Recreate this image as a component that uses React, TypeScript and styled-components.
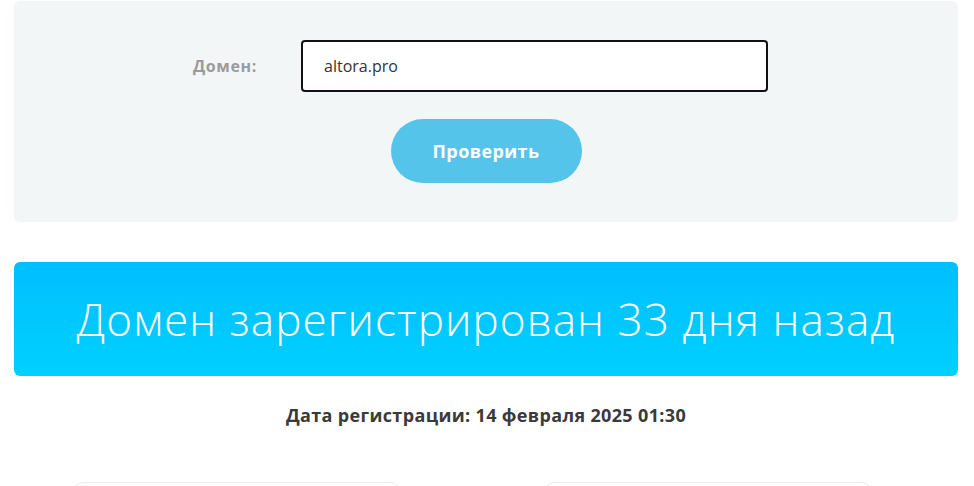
import * as React from 'react';
import styled, { createGlobalStyle } from 'styled-components';

const GlobalStyle = createGlobalStyle`
  html, body {
    margin: 0;
    padding: 0;
    background: #ffffff;
    font-family: "Open Sans", "Noto Sans", sans-serif;
  }
`;

const Page = styled.div`
  padding: 1px 16px 0 14px;
`;

const CheckPanel = styled.form`
  background: #f3f6f7;
  border-radius: 6px;
  height: 221px;
  box-sizing: border-box;
  padding-top: 39px;
  display: flex;
  flex-direction: column;
  align-items: center;
`;

const FieldRow = styled.div`
  display: flex;
  align-items: center;
  margin-left: -11px;
`;

const Label = styled.label`
  width: 108px;
  font-size: 16px;
  font-weight: 700;
  color: #9b9b9b;
  letter-spacing: 0.6px;
`;

const Input = styled.input`
  width: 467px;
  height: 52px;
  box-sizing: border-box;
  border: 2px solid #111;
  border-radius: 4px;
  background: #fff;
  padding: 0 0 0 21px;
  font-family: "Open Sans", "Noto Sans", sans-serif;
  font-size: 16px;
  color: #333;
  outline: none;
`;

const SubmitButton = styled.button`
  margin-top: 27px;
  width: 191px;
  height: 64px;
  border: none;
  border-radius: 32px;
  background: #55c4ea;
  color: #fff;
  font-family: "Open Sans", "Noto Sans", sans-serif;
  font-size: 18px;
  font-weight: 700;
  letter-spacing: 0.4px;
  cursor: pointer;
`;

const ResultBanner = styled.div`
  margin-top: 40px;
  height: 114px;
  border-radius: 6px;
  background: linear-gradient(180deg, #00bfff 0%, #00d0ff 100%);
  display: flex;
  align-items: center;
  justify-content: center;
`;

const ResultTitle = styled.h1`
  margin: 0;
  font-size: 44px;
  font-weight: 300;
  color: #fff;
  letter-spacing: 1.1px;
`;

const RegDate = styled.p`
  margin: 27px 0 0;
  text-align: center;
  font-size: 18px;
  font-weight: 700;
  color: #3a3a3a;
  letter-spacing: 0.35px;
`;

const Cards = styled.div`
  margin-top: 55px;
  display: flex;
  gap: 141px;
  padding-left: 58px;
`;

const Card = styled.div`
  width: 330px;
  height: 120px;
  border: 1px solid #ececec;
  border-radius: 12px;
  box-sizing: border-box;
`;

export default function App() {
  return (
    <>
      <GlobalStyle />
      <Page>
        <CheckPanel onSubmit={(e) => e.preventDefault()}>
          <FieldRow>
            <Label htmlFor="domain">Домен:</Label>
            <Input id="domain" defaultValue="altora.pro" />
          </FieldRow>
          <SubmitButton type="submit">Проверить</SubmitButton>
        </CheckPanel>
        <ResultBanner>
          <ResultTitle>Домен зарегистрирован 33 дня назад</ResultTitle>
        </ResultBanner>
        <RegDate>Дата регистрации: 14 февраля 2025 01:30</RegDate>
        <Cards>
          <Card />
          <Card />
        </Cards>
      </Page>
    </>
  );
}
